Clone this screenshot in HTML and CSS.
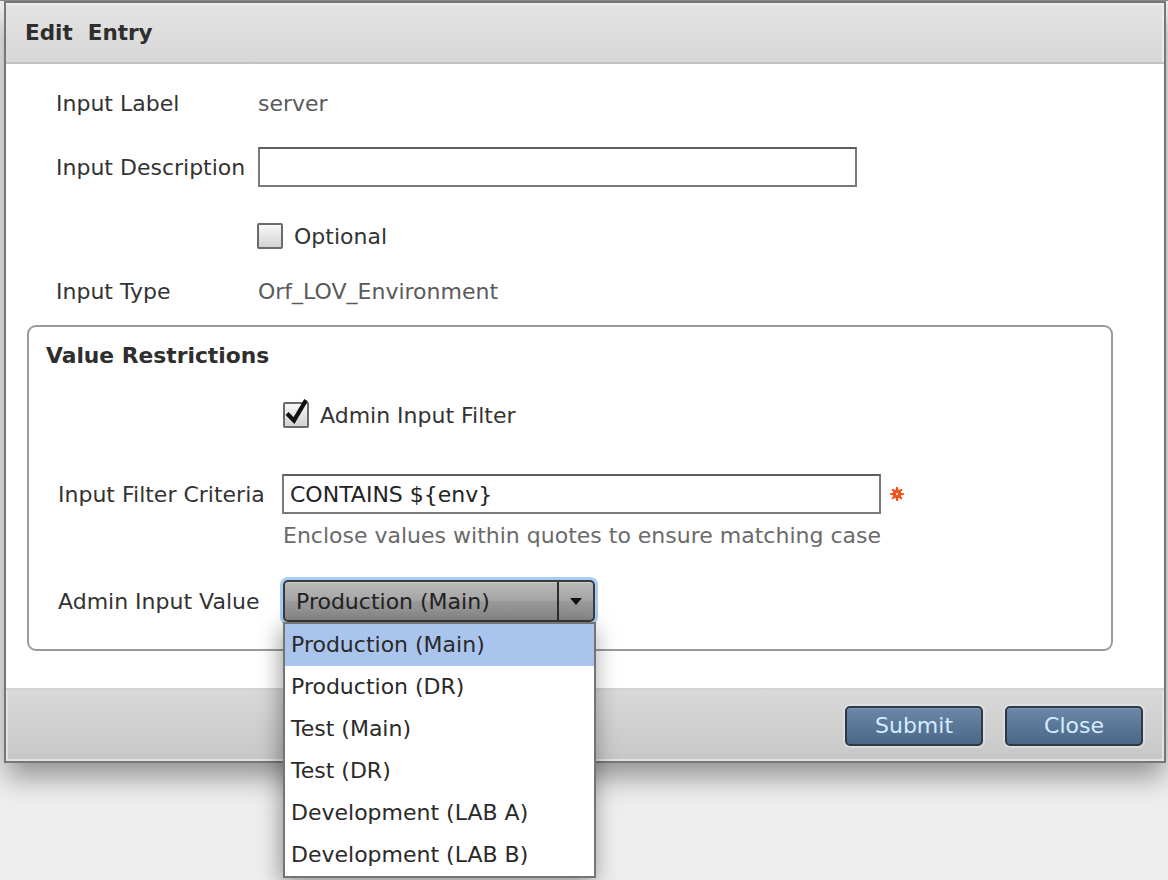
FILE: index.html
```html
<!DOCTYPE html>
<html>
<head>
<meta charset="utf-8">
<title>Edit Entry</title>
<link rel="stylesheet" href="styles.css">
</head>
<body>
<div class="dialog">
  <div class="dlg-head"><h1 class="dlg-title">Edit&nbsp; Entry</h1></div>
  <div class="dlg-body">
    <div class="row r1"><span class="lbl">Input Label</span><span class="val">server</span></div>
    <div class="row r2"><span class="lbl">Input Description</span><div class="text-input"></div></div>
    <div class="row r3"><span></span><span class="check"><span class="cb"></span><span class="cb-text">Optional</span></span></div>
    <div class="row r4"><span class="lbl">Input Type</span><span class="val">Orf_LOV_Environment</span></div>

    <div class="restrict">
      <div class="restrict-title">Value Restrictions</div>
      <div class="frow fr-cb"><span></span><span class="check"><span class="cb cb-on"><svg class="tick" viewBox="0 0 26 30" width="26" height="30"><path d="M5.5 17 L11 22.5 L22 4" fill="none" stroke="#111" stroke-width="4.2" stroke-linecap="square" stroke-linejoin="miter"/></svg></span><span class="cb-text">Admin Input Filter</span></span></div>
      <div class="frow fr-filter"><span class="lbl">Input Filter Criteria</span><span class="filter-wrap"><span class="text-input filled">CONTAINS ${env}</span><svg class="req" viewBox="0 0 14 14" width="14" height="14"><g stroke="#f0501a" stroke-width="2.2" stroke-linecap="round"><line x1="7" y1="1" x2="7" y2="13"/><line x1="1" y1="7" x2="13" y2="7"/><line x1="2.8" y1="2.8" x2="11.2" y2="11.2"/><line x1="11.2" y1="2.8" x2="2.8" y2="11.2"/></g><circle cx="7" cy="7" r="3.4" fill="none" stroke="#f0501a" stroke-width="2"/><circle cx="7" cy="7" r="1.2" fill="#ffd2c0"/></svg></span></div>
      <div class="frow fr-help"><span></span><span class="help">Enclose values within quotes to ensure matching case</span></div>
      <div class="frow fr-select"><span class="lbl">Admin Input Value</span>
        <div class="select">
          <span class="select-text">Production (Main)</span>
          <span class="select-btn"><span class="arrow"></span></span>
          <ul class="menu">
            <li class="active">Production (Main)</li>
            <li>Production (DR)</li>
            <li>Test (Main)</li>
            <li>Test (DR)</li>
            <li>Development (LAB A)</li>
            <li>Development (LAB B)</li>
          </ul>
        </div>
      </div>
    </div>
  </div>
  <div class="dlg-foot">
    <button class="btn">Submit</button>
    <button class="btn">Close</button>
  </div>
</div>
</body>
</html>
```

FILE: styles.css
```css
html, body {
  margin: 0;
  padding: 0;
}
body {
  font-family: "DejaVu Sans", Verdana, sans-serif;
  font-size: 22px;
  color: #333;
  background: linear-gradient(#8c8c8c 0, #8c8c8c 1px, #eeeeee 1px);
  height: 880px;
  overflow: hidden;
}
.dialog {
  margin: 1px 0 0 4px;
  width: 1158px;
  border: 2px solid #777;
  background: #fff;
  box-shadow: 0 16px 26px -2px rgba(0,0,0,0.38);
}
.dlg-head {
  height: 59px;
  border-bottom: 2px solid #c2c2c2;
  background: linear-gradient(#e4e4e4, #d7d7d7);
  box-shadow: inset 0 2px 0 #ececec, inset -2px 0 0 #ececec;
  display: flex;
  align-items: center;
  padding-left: 19px;
}
.dlg-title {
  margin: 0;
  font-size: 21.5px;
  font-weight: bold;
  color: #2e2e2e;
}
.dlg-body {
  padding: 7px 51px 37px 21px;
}
.row {
  display: grid;
  grid-template-columns: 202px 1fr;
  align-items: center;
  margin-left: 29px;
}
.r1 { height: 64px; }
.r2 { height: 64px; }
.r3 { height: 74px; }
.r4 { height: 36px; }
.lbl { color: #333; }
.val { color: #5a5a5a; }
.text-input {
  box-sizing: border-box;
  width: 599px;
  height: 40px;
  border: 2px solid #7a7a7a;
  border-top-color: #5e5e5e;
  background: #fff;
  display: flex;
  align-items: center;
  padding-left: 6px;
  color: #222;
}
.check {
  display: flex;
  align-items: center;
}
.cb {
  position: relative;
  box-sizing: border-box;
  width: 26px;
  height: 26px;
  margin-left: -1px;
  border: 2px solid #6a6a6a;
  border-radius: 2px;
  background: linear-gradient(#f8f8f8, #d2d2d2);
}
.tick {
  position: absolute;
  left: -2px;
  top: -6px;
}
.cb-text {
  margin-left: 11px;
  color: #333;
}
.restrict {
  margin-top: 16px;
  border: 2px solid #9b9b9b;
  border-radius: 9px;
  padding: 11px 0 27px 17px;
}
.restrict-title {
  height: 36px;
  line-height: 36px;
  font-weight: bold;
  font-size: 21.8px;
  color: #2e2e2e;
}
.frow {
  display: grid;
  grid-template-columns: 224px 1fr;
  align-items: center;
  margin-left: 12px;
}
.fr-cb { margin-top: 21px; height: 40px; }
.fr-cb .cb { margin-left: 1px; }
.fr-filter { margin-top: 39px; height: 40px; }
.fr-help { margin-top: 9px; height: 24px; }
.fr-select { margin-top: 33px; height: 42px; }
.filter-wrap {
  display: flex;
  align-items: center;
}
.req {
  margin-left: 9px;
}
.help {
  color: #6a6a6a;
  margin-left: 1px;
}
.select {
  position: relative;
  box-sizing: border-box;
  width: 312px;
  height: 42px;
  margin-left: 1px;
  border: 2px solid #3a3a3a;
  border-radius: 5px;
  background: linear-gradient(#b9b9b9, #a6a6a6 48%, #999 52%, #8b8b8b);
  box-shadow: 0 0 0 3px #a5cdf5, inset 0 1px 0 #cfcfcf;
  display: flex;
  align-items: center;
}
.select-text {
  flex: 1;
  padding-left: 11px;
  color: #222;
}
.select-btn {
  width: 34px;
  height: 100%;
  border-left: 2px solid #2e2e2e;
  display: flex;
  align-items: center;
  justify-content: center;
}
.arrow {
  width: 0;
  height: 0;
  border-left: 6px solid transparent;
  border-right: 6px solid transparent;
  border-top: 7px solid #111;
  margin-top: 1px;
}
.menu {
  position: absolute;
  top: 40px;
  left: -2px;
  box-sizing: border-box;
  width: 313px;
  margin: 0;
  padding: 0;
  list-style: none;
  background: #fff;
  border: 2px solid #747474;
  box-shadow: -2px 6px 22px rgba(0,0,0,0.4);
  z-index: 5;
}
.menu li {
  height: 42px;
  line-height: 42px;
  padding-left: 6px;
  color: #2a2a2a;
}
.menu li.active {
  background: #a9c5ee;
}
.dlg-foot {
  height: 71px;
  border-top: 2px solid #d2d2d2;
  background: linear-gradient(#d9d9d9, #c7c7c7);
  box-shadow: inset 2px 0 0 #e2e2e2, inset -2px 0 0 #e2e2e2, inset 0 -2px 0 #e2e2e2;
  display: flex;
  align-items: center;
  justify-content: flex-end;
  gap: 22px;
  padding-right: 21px;
}
.btn {
  box-sizing: border-box;
  width: 138px;
  height: 40px;
  border: 2px solid #2d3947;
  border-radius: 5px;
  background: linear-gradient(#6b87a7, #4c6889);
  box-shadow: 0 0 0 2px rgba(230,230,230,0.6), inset 0 1px 0 rgba(255,255,255,0.15);
  color: #d4ecff;
  font-family: "DejaVu Sans", Verdana, sans-serif;
  font-size: 22px;
  padding: 0;
}
```
